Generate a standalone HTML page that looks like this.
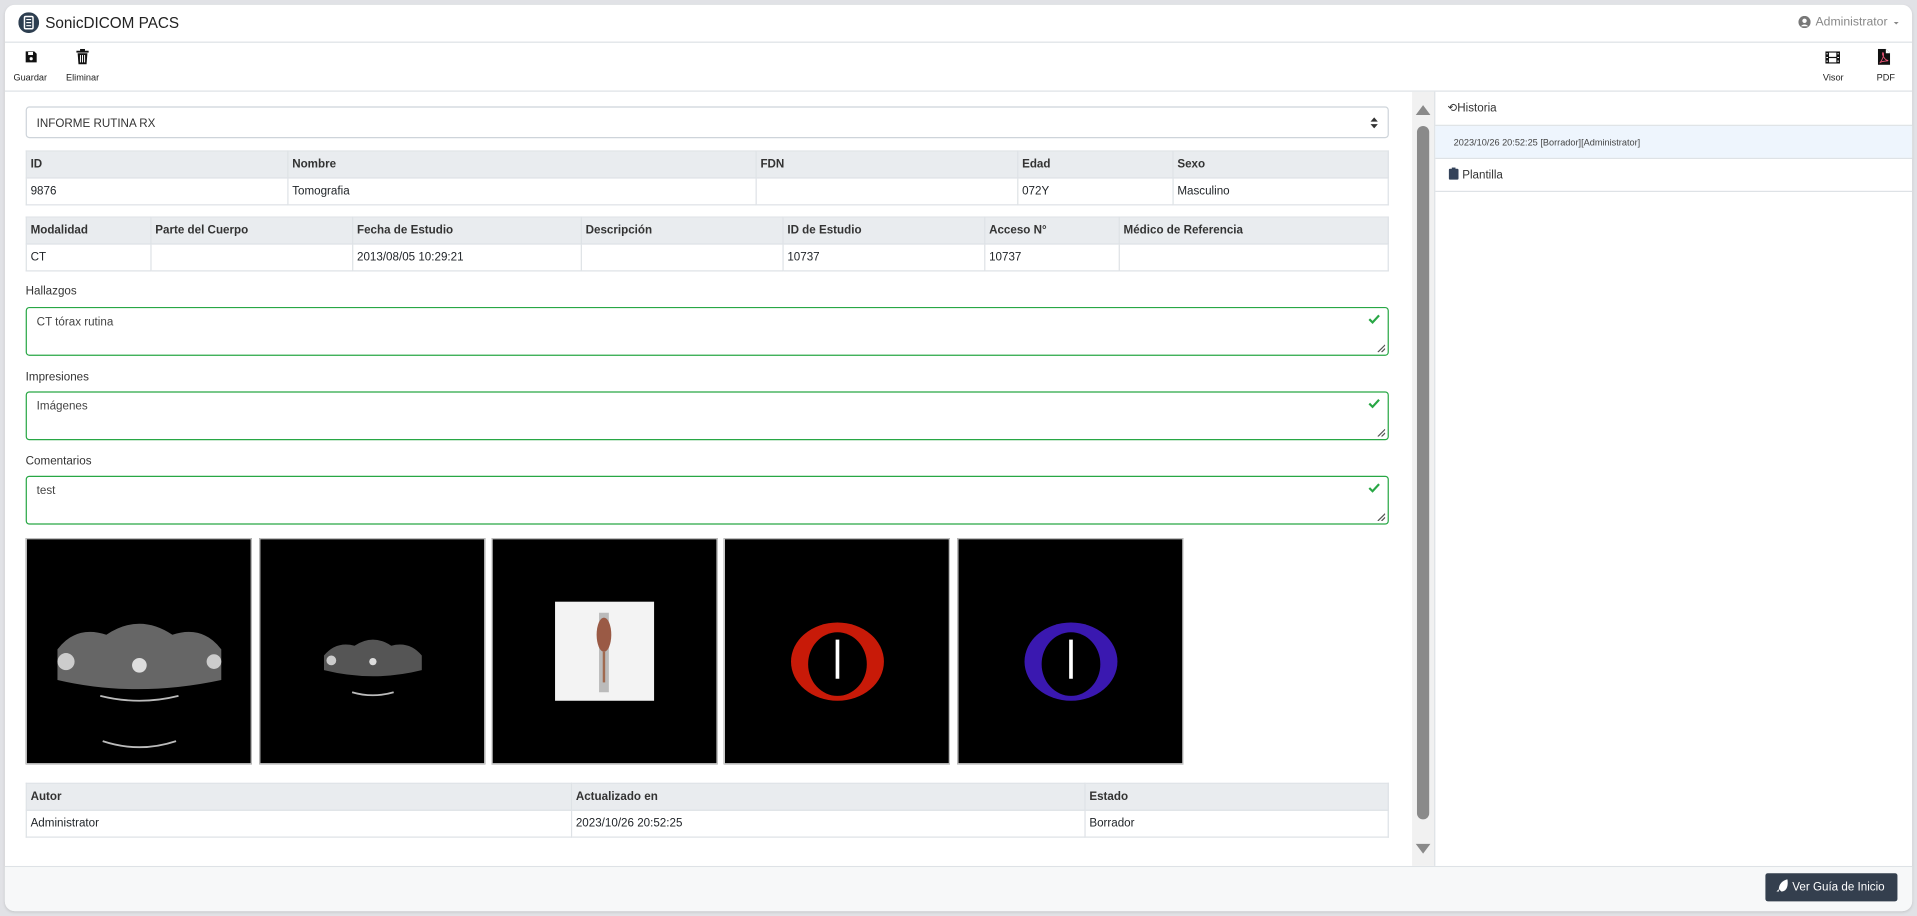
<!DOCTYPE html>
<html><head><meta charset="utf-8"><style>
*{box-sizing:border-box;margin:0;padding:0}
html,body{width:1917px;height:916px;overflow:hidden;background:#e1e2e6;font-family:"Liberation Sans",sans-serif;color:#212529}
#s{position:absolute;left:0;top:0;width:1568px;height:749px;transform:scale(1.22258,1.22296);transform-origin:0 0}
.a{position:absolute}
.card{left:4px;top:4px;width:1560px;height:741px;background:#fff;border-radius:8px;overflow:hidden;box-shadow:0 1px 2px #c8c9cc}
table{position:absolute;border-collapse:collapse;font-size:9.5px;left:21px;width:1115px;table-layout:fixed}
td,th{border:1px solid #dee2e6;height:22px;padding:0 3px;text-align:left;white-space:nowrap}
th{background:#e9ecef;font-weight:bold;color:#333}
.lbl{font-size:9.5px;left:21px;color:#333}
.ta{left:21px;width:1115px;height:40px;border:1px solid #28a745;border-radius:3px;font-size:9.5px;padding:6px 8px;color:#444}
.ck{position:absolute;right:6px;top:5px}
.rz{position:absolute;right:2px;bottom:2px}
.img{top:440px;width:185px;height:185px;background:#000;border:1px solid #ccc}
.tb{font-size:8px;text-align:center;color:#222}
</style></head><body><div id="s">
<div class="a card">
 <div class="a" style="left:0;top:0;width:1560px;height:31px;border-bottom:1px solid #dee2e6"></div>
 <svg class="a" style="left:11px;top:6px" width="17" height="17" viewBox="0 0 17 17"><circle cx="8.5" cy="8.5" r="8.5" fill="#2d3e50"/><rect x="5" y="3.5" width="7" height="10" rx="1" fill="none" stroke="#fff" stroke-width="1.2"/><path d="M6.5 6h4M6.5 8.5h4M6.5 11h4" stroke="#fff" stroke-width="1"/></svg>
 <div class="a" style="left:33px;top:8px;font-size:12.5px;color:#222">SonicDICOM PACS</div>
 <svg class="a" style="left:1467px;top:9px" width="10" height="10" viewBox="0 0 10 10"><circle cx="5" cy="5" r="5" fill="#777"/><circle cx="5" cy="4" r="1.8" fill="#fff"/><path d="M2 8.5a3.5 3 0 0 1 6 0" fill="#fff"/></svg>
 <div class="a" style="left:1481px;top:9px;font-size:10px;color:#888">Administrator</div>
 <div class="a" style="left:1545px;top:14px;border:2.5px solid transparent;border-top-color:#888"></div>
 <div class="a" style="left:0;top:31px;width:1560px;height:40px;border-bottom:1px solid #dee2e6"></div>
 <svg class="a" style="left:16px;top:37px" width="11" height="11" viewBox="0 0 11 11"><path d="M1 1h7l2 2v7H1z" fill="#111"/><rect x="3" y="1.5" width="4" height="2.5" fill="#fff"/><circle cx="5.5" cy="7" r="1.3" fill="#fff"/></svg>
 <div class="a tb" style="left:7px;top:55px;font-size:7.5px">Guardar</div>
 <svg class="a" style="left:58px;top:36px" width="11" height="13" viewBox="0 0 11 13"><rect x="0.5" y="1.5" width="10" height="1.5" fill="#111"/><rect x="3.5" y="0" width="4" height="2" fill="#111"/><path d="M1.5 3.5h8l-.7 9H2.2z" fill="#111"/><path d="M3.8 5v6M5.5 5v6M7.2 5v6" stroke="#fff" stroke-width=".8"/></svg>
 <div class="a tb" style="left:50px;top:55px;font-size:7.5px">Eliminar</div>
 <svg class="a" style="left:1489px;top:38px" width="12" height="10" viewBox="0 0 12 10"><rect x="0" y="0" width="12" height="10" fill="#111"/><rect x="3" y="1" width="6" height="3.5" fill="#fff"/><rect x="3" y="5.5" width="6" height="3.5" fill="#fff"/><path d="M0.8 2h1.4M0.8 5h1.4M0.8 8h1.4M9.8 2h1.4M9.8 5h1.4M9.8 8h1.4" stroke="#fff" stroke-width=".8"/></svg>
 <div class="a tb" style="left:1487px;top:55px;font-size:7.5px">Visor</div>
 <svg class="a" style="left:1532px;top:36px" width="10" height="13" viewBox="0 0 10 13"><path d="M0 0h6.5l3.5 3.5V13H0z" fill="#111"/><path d="M6.5 0v3.5H10" fill="#fff"/><path d="M2 11c2-3 3-6 2.5-7.5S3 4 5 7s3 2 3.2 2.5S5 9.5 2 11z" fill="none" stroke="#e57" stroke-width=".7"/></svg>
 <div class="a tb" style="left:1531px;top:55px;font-size:7.5px">PDF</div>
 <div class="a" style="left:17px;top:83px;width:1115px;height:26px;border:1px solid #ced4da;border-radius:3px;font-size:9.5px;padding:8px 8px;color:#333">INFORME RUTINA RX</div>
 <svg class="a" style="left:1117px;top:92px" width="6" height="9" viewBox="0 0 6 9"><path d="M0 3.5L3 0l3 3.5zM0 5.5L3 9l3-3.5z" fill="#333"/></svg>
</div>
<table style="top:123px"><colgroup><col style="width:214px"><col style="width:383px"><col style="width:214px"><col style="width:127px"><col></colgroup>
<tr><th>ID</th><th>Nombre</th><th>FDN</th><th>Edad</th><th>Sexo</th></tr>
<tr><td>9876</td><td>Tomografia</td><td></td><td>072Y</td><td>Masculino</td></tr></table>
<table style="top:177px"><colgroup><col style="width:102px"><col style="width:165px"><col style="width:187px"><col style="width:165px"><col style="width:165px"><col style="width:110px"><col></colgroup>
<tr><th>Modalidad</th><th>Parte del Cuerpo</th><th>Fecha de Estudio</th><th>Descripción</th><th>ID de Estudio</th><th>Acceso N°</th><th>Médico de Referencia</th></tr>
<tr><td>CT</td><td></td><td>2013/08/05 10:29:21</td><td></td><td>10737</td><td>10737</td><td></td></tr></table>

<div class="a lbl" style="top:233px">Hallazgos</div>
<div class="a ta" style="top:251px">CT tórax rutina<svg class="ck" width="10" height="8" viewBox="0 0 11 9"><path d="M1 4.5l3 3L10 1" fill="none" stroke="#28a745" stroke-width="2"/></svg><svg class="rz" width="7" height="7"><path d="M1 7L7 1M4 7l3-3" stroke="#555"/></svg></div>
<div class="a lbl" style="top:303px">Impresiones</div>
<div class="a ta" style="top:320px">Imágenes<svg class="ck" width="10" height="8" viewBox="0 0 11 9"><path d="M1 4.5l3 3L10 1" fill="none" stroke="#28a745" stroke-width="2"/></svg><svg class="rz" width="7" height="7"><path d="M1 7L7 1M4 7l3-3" stroke="#555"/></svg></div>
<div class="a lbl" style="top:372px">Comentarios</div>
<div class="a ta" style="top:389px">test<svg class="ck" width="10" height="8" viewBox="0 0 11 9"><path d="M1 4.5l3 3L10 1" fill="none" stroke="#28a745" stroke-width="2"/></svg><svg class="rz" width="7" height="7"><path d="M1 7L7 1M4 7l3-3" stroke="#555"/></svg></div>

<div class="a img" style="left:21px"><svg width="183" height="183"><path d="M25 90q15-20 40-12q27-18 54 0q25-8 40 12v25q-70 15-134 0z" fill="#666"/><circle cx="32" cy="100" r="7" fill="#ccc"/><circle cx="153" cy="100" r="6" fill="#ccc"/><circle cx="92" cy="103" r="6" fill="#ddd"/><path d="M60 128q32 8 64 0M62 165q30 10 60 0" stroke="#bbb" stroke-width="1.5" fill="none"/></svg></div>
<div class="a img" style="left:212px"><svg width="183" height="183"><path d="M52 95q10-12 25-8q15-10 30 0q15-4 25 8v12q-40 10-80 0z" fill="#555"/><circle cx="58" cy="99" r="4" fill="#ccc"/><circle cx="92" cy="100" r="3" fill="#ddd"/><path d="M75 125q17 5 34 0" stroke="#bbb" stroke-width="1.5" fill="none"/></svg></div>
<div class="a img" style="left:402px"><svg width="183" height="183"><rect x="51" y="51" width="81" height="81" fill="#f3f3f3"/><path d="M91 60v65" stroke="#bbb" stroke-width="8"/><ellipse cx="91" cy="78" rx="6" ry="14" fill="#9a5a45"/><path d="M91 92v25" stroke="#a06a50" stroke-width="2"/></svg></div>
<div class="a img" style="left:592px"><svg width="183" height="183"><ellipse cx="92" cy="100" rx="38" ry="32" fill="#c81a08"/><ellipse cx="92" cy="102" rx="24" ry="26" fill="#000"/><path d="M92 82v32" stroke="#fff" stroke-width="3"/></svg></div>
<div class="a img" style="left:783px"><svg width="183" height="183"><ellipse cx="92" cy="100" rx="38" ry="32" fill="#3a18b0"/><ellipse cx="92" cy="102" rx="24" ry="26" fill="#000"/><path d="M92 82v32" stroke="#fff" stroke-width="3"/></svg></div>

<table style="top:640px"><colgroup><col style="width:446px"><col style="width:420px"><col></colgroup>
<tr><th>Autor</th><th>Actualizado en</th><th>Estado</th></tr>
<tr><td>Administrator</td><td>2023/10/26 20:52:25</td><td>Borrador</td></tr></table>

<div class="a" style="left:1155px;top:75px;width:19px;height:633px;background:#f1f1f1;border-right:1px solid #dee2e6"></div>
<div class="a" style="left:1158px;top:86px;border:6px solid transparent;border-bottom:8px solid #8a8a8a;border-top:0"></div>
<div class="a" style="left:1159px;top:103px;width:10px;height:567px;background:#8a8a8a;border-radius:5px"></div>
<div class="a" style="left:1158px;top:690px;border:6px solid transparent;border-top:8px solid #8a8a8a;border-bottom:0"></div>

<div class="a" style="left:1174px;top:75px;width:390px;height:28px;border-bottom:1px solid #dee2e6;font-size:9.5px;padding:8px 10px;color:#333">&#x27F2;Historia</div>
<div class="a" style="left:1174px;top:103px;width:390px;height:26px;background:#eef5fd;font-size:7.5px;padding:9px 15px;color:#444">2023/10/26 20:52:25 [Borrador][Administrator]</div>
<div class="a" style="left:1174px;top:129px;width:390px;height:28px;border-bottom:1px solid #dee2e6;border-top:1px solid #dee2e6;font-size:9.5px;padding:8px 10px 0 22px;color:#333">Plantilla</div>
<svg class="a" style="left:1185px;top:137px" width="8" height="10" viewBox="0 0 8 10"><rect x="0" y="1" width="8" height="9" rx="1" fill="#34435a"/><rect x="2.5" y="0" width="3" height="2" fill="#34435a"/></svg>

<div class="a" style="left:4px;top:708px;width:1560px;height:37px;background:#f7f8f9;border-top:1px solid #dee2e6;border-radius:0 0 8px 8px"></div>
<div class="a" style="left:1444px;top:714px;width:108px;height:23px;background:#343f4e;border-radius:2px;color:#fff;font-size:9.5px;padding:6px 0 0 22px">Ver Guía de Inicio</div>
<svg class="a" style="left:1453px;top:719px" width="10" height="12" viewBox="0 0 10 12"><path d="M9 0C5 1 2 4 2 8l2 2c4 0 6-4 5-10z" fill="#fff"/><path d="M2 8L0 10l2 0z" fill="#fff"/></svg>
</div></body></html>
